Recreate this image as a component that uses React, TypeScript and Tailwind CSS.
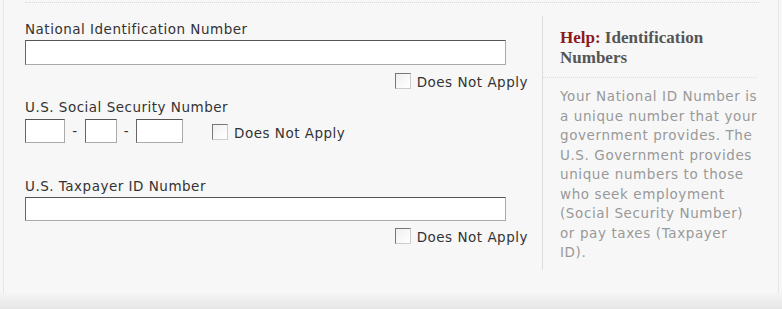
import React from 'react';

const font = { fontFamily: '"DejaVu Sans", Verdana, sans-serif' };

const helpLines = [
  'Your National ID Number is',
  'a unique number that your',
  'government provides. The',
  'U.S. Government provides',
  'unique numbers to those',
  'who seek employment',
  '(Social Security Number)',
  'or pay taxes (Taxpayer',
  'ID).',
];

const Checkbox: React.FC<{ label: string }> = ({ label }) => (
  <label className="flex items-center gap-[6px] text-[13.5px] leading-[16px] tracking-[0.5px] text-[#333]">
    <input
      type="checkbox"
      className="appearance-none w-[16px] h-[16px] border border-t-[#777] border-l-[#777] border-b-[#ccc] border-r-[#ccc] bg-gradient-to-br from-[#f0f0f0] to-white"
    />
    <span className="translate-y-[1px]">{label}</span>
  </label>
);

const boxCls =
  'h-[24px] bg-white border border-t-[#555] border-l-[#666] border-b-[#aaa] border-r-[#aaa]';

export default function App() {
  return (
    <div className="w-[782px] h-[309px] bg-[#f7f7f7] flex flex-col" style={font}>
      <div className="flex-1 mx-[3px] border-l border-r border-[#e6e6e6] px-[21px] pt-[2px]">
        <div className="border-t border-dotted border-[#d8d8d8] w-[734px] flex">
          {/* form */}
          <div className="w-[503px] pt-[18px] text-[13.5px] leading-[16px] tracking-[0.5px] text-[#333]">
            <div>National Identification Number</div>
            <div className={`${boxCls} w-[481px] h-[25px] mt-[3px]`} />
            <div className="flex justify-end mt-[8px]">
              <Checkbox label="Does Not Apply" />
            </div>

            <div className="mt-[10px]">U.S. Social Security Number</div>
            <div className="flex items-center mt-[4px]">
              <div className={`${boxCls} w-[40px]`} />
              <span className="w-[20px] text-center">-</span>
              <div className={`${boxCls} w-[32px]`} />
              <span className="w-[19px] text-center">-</span>
              <div className={`${boxCls} w-[47px]`} />
              <div className="ml-[29px] mt-[2px]">
                <Checkbox label="Does Not Apply" />
              </div>
            </div>

            <div className="mt-[35px]">U.S. Taxpayer ID Number</div>
            <div className={`${boxCls} w-[481px] mt-[3px]`} />
            <div className="flex justify-end mt-[7px]">
              <Checkbox label="Does Not Apply" />
            </div>
          </div>

          {/* help */}
          <div className="ml-[14px] mt-[13px] h-[254px] w-[214px] border-l border-[#ddd]">
            <div
              className="pl-[17px] pt-[12px] pb-[9px] text-[17px] leading-[20px] font-bold text-[#555] border-b border-dotted border-[#ddd]"
              style={{ fontFamily: '"Liberation Serif", "Times New Roman", serif' }}
            >
              <span className="text-[#8b1a1a]">Help:</span> Identification Numbers
            </div>
            <p className="pl-[17px] pt-[9px] text-[13.5px] leading-[19.5px] tracking-[0.6px] text-[#999] whitespace-nowrap">
              {helpLines.map(l => (
                <span key={l} className="block">{l}</span>
              ))}
            </p>
          </div>
        </div>
      </div>
      <div className="h-[16px] bg-gradient-to-b from-[#f5f5f5] to-[#e6e6e6]" />
    </div>
  );
}
